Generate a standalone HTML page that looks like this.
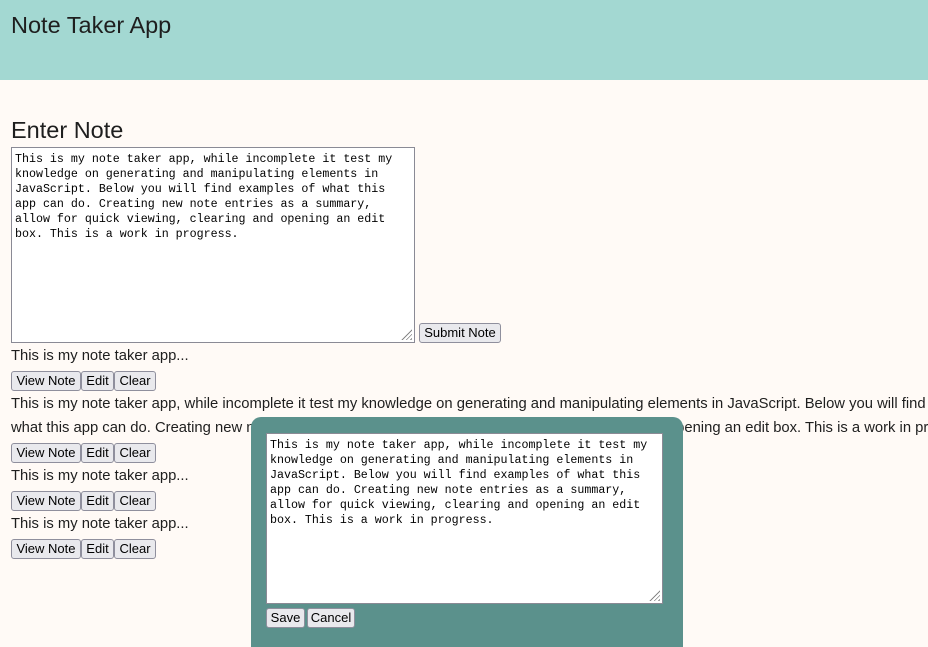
<!DOCTYPE html>
<html><head><meta charset="utf-8"><style>
html,body{margin:0;padding:0;width:928px;height:647px;overflow:hidden;background:#fffaf6;font-family:"Liberation Sans",sans-serif;color:#1e1e1e}
#wrap{position:relative;width:928px;height:647px;overflow:hidden}
.a{position:absolute;white-space:nowrap}
header{position:absolute;left:0;top:0;width:928px;height:80px;background:#a3d8d2}
h1{position:absolute;left:11px;top:12px;margin:0;font-size:23.5px;font-weight:normal}
h2{position:absolute;left:11px;top:117px;margin:0;font-size:23.5px;font-weight:normal}
.ta{position:absolute;background:#fff;border:1px solid #8a8a95;box-sizing:border-box;font-family:"Liberation Mono",monospace;font-size:11.65px;line-height:15px;padding:4px 3px;white-space:pre;color:#000}
.btn{position:absolute;height:20px;box-sizing:border-box;border:1px solid #8f8f9d;border-radius:3px;background:#e9e9ed;font-size:13px;line-height:18px;text-align:center;color:#000}
.t{font-size:14.8px}
.grip{position:absolute;right:2px;bottom:2px;width:11px;height:11px;background:repeating-linear-gradient(135deg,transparent 0 2px,#888 2px 3px);clip-path:polygon(100% 0,100% 100%,0 100%)}
.modal{position:absolute;left:251px;top:417px;width:432px;height:240px;background:#5b918c;border-radius:10px 10px 0 0}
</style></head><body><div id="wrap">
<header><h1>Note Taker App</h1></header>
<h2>Enter Note</h2>
<div class="ta" style="left:11px;top:147px;width:404px;height:196px">This is my note taker app, while incomplete it test my
knowledge on generating and manipulating elements in
JavaScript. Below you will find examples of what this
app can do. Creating new note entries as a summary,
allow for quick viewing, clearing and opening an edit
box. This is a work in progress.<div class="grip"></div></div>
<div class="btn" style="left:419px;top:323px;width:82px">Submit Note</div>

<div class="a t" style="left:11px;top:348px">This is my note taker app...</div>
<div class="btn" style="left:11px;top:371px;width:70px">View Note</div>
<div class="btn" style="left:81px;top:371px;width:33px">Edit</div>
<div class="btn" style="left:114px;top:371px;width:42px">Clear</div>

<div class="a t" style="left:11px;top:396px">This is my note taker app, while incomplete it test my knowledge on generating and manipulating elements in JavaScript. Below you will find examples of</div>
<div class="a t" style="left:11px;top:420px">what this app can do. Creating new note entries as a summary, allow for quick viewing, clearing and opening an edit box. This is a work in progress.</div>
<div class="btn" style="left:11px;top:443px;width:70px">View Note</div>
<div class="btn" style="left:81px;top:443px;width:33px">Edit</div>
<div class="btn" style="left:114px;top:443px;width:42px">Clear</div>

<div class="a t" style="left:11px;top:468px">This is my note taker app...</div>
<div class="btn" style="left:11px;top:491px;width:70px">View Note</div>
<div class="btn" style="left:81px;top:491px;width:33px">Edit</div>
<div class="btn" style="left:114px;top:491px;width:42px">Clear</div>

<div class="a t" style="left:11px;top:516px">This is my note taker app...</div>
<div class="btn" style="left:11px;top:539px;width:70px">View Note</div>
<div class="btn" style="left:81px;top:539px;width:33px">Edit</div>
<div class="btn" style="left:114px;top:539px;width:42px">Clear</div>

<div class="modal"></div>
<div class="ta" style="left:266px;top:433px;width:397px;height:171px">This is my note taker app, while incomplete it test my
knowledge on generating and manipulating elements in
JavaScript. Below you will find examples of what this
app can do. Creating new note entries as a summary,
allow for quick viewing, clearing and opening an edit
box. This is a work in progress.<div class="grip"></div></div>
<div class="btn" style="left:266px;top:608px;width:39px">Save</div>
<div class="btn" style="left:307px;top:608px;width:48px">Cancel</div>
</div></body></html>
